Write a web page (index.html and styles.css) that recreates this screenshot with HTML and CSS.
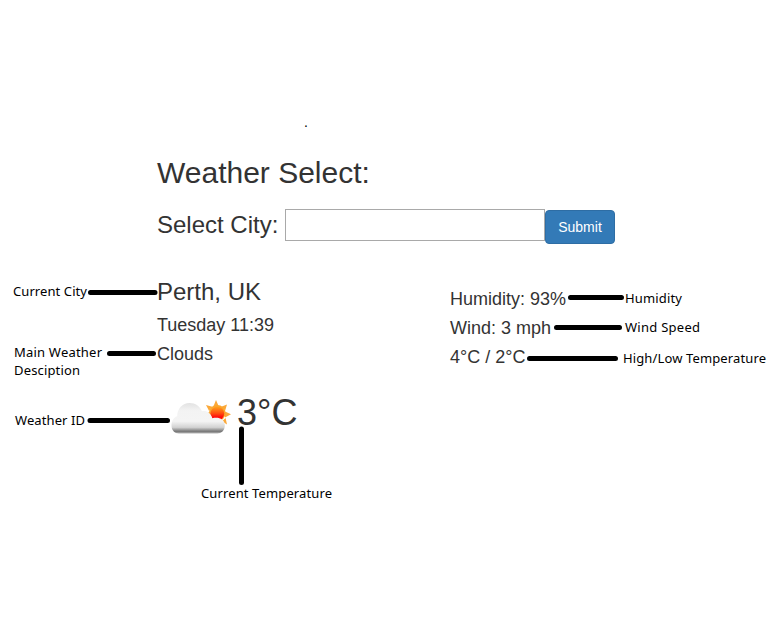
FILE: index.html
```html
<!DOCTYPE html>
<html lang="en">
<head>
<meta charset="utf-8">
<title>Weather Select</title>
<link rel="stylesheet" href="styles.css">
</head>
<body>
<main class="page">
  <div class="dot">.</div>
  <h2 class="title">Weather Select:</h2>
  <form class="search">
    <label class="search-label" for="city">Select City:</label>
    <input class="search-input" id="city" type="text">
    <button class="search-button" type="button">Submit</button>
  </form>
  <section class="report">
    <div class="summary">
      <h3 class="city">Perth, UK</h3>
      <h4 class="line">Tuesday 11:39</h4>
      <h4 class="line">Clouds</h4>
      <div class="current">
        <svg class="icon" width="64" height="40" viewBox="0 0 64 40">
          <defs>
            <linearGradient id="cloud" x1="0" y1="0" x2="0" y2="1">
              <stop offset="0" stop-color="#e2e2e2"/>
              <stop offset=".25" stop-color="#f3f3f3"/>
              <stop offset=".6" stop-color="#f4f4f4"/>
              <stop offset=".8" stop-color="#d2d2d2"/>
              <stop offset=".93" stop-color="#777"/>
              <stop offset="1" stop-color="#b5b5b5"/>
            </linearGradient>
            <linearGradient id="sun" x1="0" y1="0" x2="0" y2="1">
              <stop offset="0" stop-color="#ffa21c"/>
              <stop offset=".5" stop-color="#ff4a10"/>
              <stop offset=".75" stop-color="#ff0c0c"/>
            </linearGradient>
          </defs>
          <path fill="#fba93a" d="M46 3l2.600 6-5.200.4zM57 7.600l-1.800 6-4-3.800zM36 8l6.400 1.800-3.400 4zM61 17.300l-6 3.200v-6zM57 27.500l-5-3.200 3.600-3.400zM35.500 17l4-2v3z"/>
          <circle cx="47.200" cy="16.200" r="8.300" fill="#fba62f"/>
          <circle cx="47.300" cy="16.600" r="6.900" fill="url(#sun)"/>
          <path fill="url(#cloud)" d="M9 36.500C4.500 36.500 1.500 33 1.500 28.500c0-4.500 2.200-8 5.700-9.200C7.200 11.500 12.500 6 19.500 6c6 0 10.500 3.500 12.500 8.200 4.500-1 8.800 1.800 10.300 7 2.200-.4 5-.6 7 0C53.500 22.200 55 25.500 54.800 29c-.2 4.500-3.300 7.500-7.500 7.500z"/>
        </svg>
        <span class="temperature">3°C</span>
      </div>
    </div>
    <div class="details">
      <h4 class="line">Humidity: 93%</h4>
      <h4 class="line">Wind: 3 mph</h4>
      <h4 class="line">4°C / 2°C</h4>
    </div>
  </section>
  <svg class="notes" width="771" height="632" viewBox="0 0 771 632">
    <path class="leader" d="M90.500 292.500H155M109.500 353.500H153.500M90 420.500H167.500M570.500 297.500H621.500M556.500 327.500H619.500M529.500 358.500H615.500M241.500 429V482.500"/>
    <g class="note">
      <text x="13" y="296" textLength="74">Current City</text>
      <text x="14" y="357" textLength="88">Main Weather</text>
      <text x="14" y="375" textLength="66">Desciption</text>
      <text x="15" y="425" textLength="70">Weather ID</text>
      <text x="201" y="498" textLength="131">Current Temperature</text>
      <text x="625" y="303" textLength="57">Humidity</text>
      <text x="625" y="332" textLength="75">Wind Speed</text>
      <text x="623" y="363" textLength="143">High/Low Temperature</text>
    </g>
  </svg>
</main>
</body>
</html>
```
FILE: styles.css
```css
* { box-sizing: border-box; }
body {
  margin: 0;
  background: #fff;
  color: #333;
  font-family: "Liberation Sans", Arial, sans-serif;
}
h2, h3, h4 { margin: 0; font-weight: 400; }
.page {
  position: relative;
  width: 771px;
  height: 632px;
  padding: 115px 0 0 157px;
  overflow: hidden;
}
.dot {
  height: 41px;
  padding-left: 147px;
  font-size: 14px;
  line-height: 14px;
  color: #000;
}
.title { font-size: 30px; line-height: 33px; }
.search {
  display: flex;
  align-items: flex-start;
  height: 70px;
  margin-top: 20px;
}
.search-label {
  width: 128px;
  padding-top: 3px;
  font-size: 24px;
  line-height: 26px;
  white-space: nowrap;
}
.search-input {
  width: 260px;
  height: 32px;
  padding: 2px 6px;
  border: 1px solid #a9a9a9;
  font: 24px "Liberation Sans", Arial, sans-serif;
}
.search-button {
  width: 70px;
  height: 34px;
  margin-top: 1px;
  padding: 0;
  border: 1px solid #2e6da4;
  border-radius: 4px;
  background: #337ab7;
  color: #fff;
  font: 14px/20px "Liberation Sans", Arial, sans-serif;
}
.report { display: flex; }
.summary { width: 293px; }
.details { padding-top: 1px; }
.city { margin-bottom: 10px; font-size: 24px; line-height: 26px; }
.line { font-size: 18px; line-height: 20px; margin: 9px 0; }
.current { display: flex; margin-top: 28px; padding-left: 13px; }
.icon { margin-top: 5px; }
.temperature { margin: 1px 0 0 3px; font-size: 36px; line-height: 40px; }
.notes { position: absolute; top: 0; left: 0; pointer-events: none; }
.leader { fill: none; stroke: #000; stroke-width: 5; stroke-linecap: round; }
.note { fill: #000; font: 13px "Noto Sans", "Open Sans", sans-serif; }
```
